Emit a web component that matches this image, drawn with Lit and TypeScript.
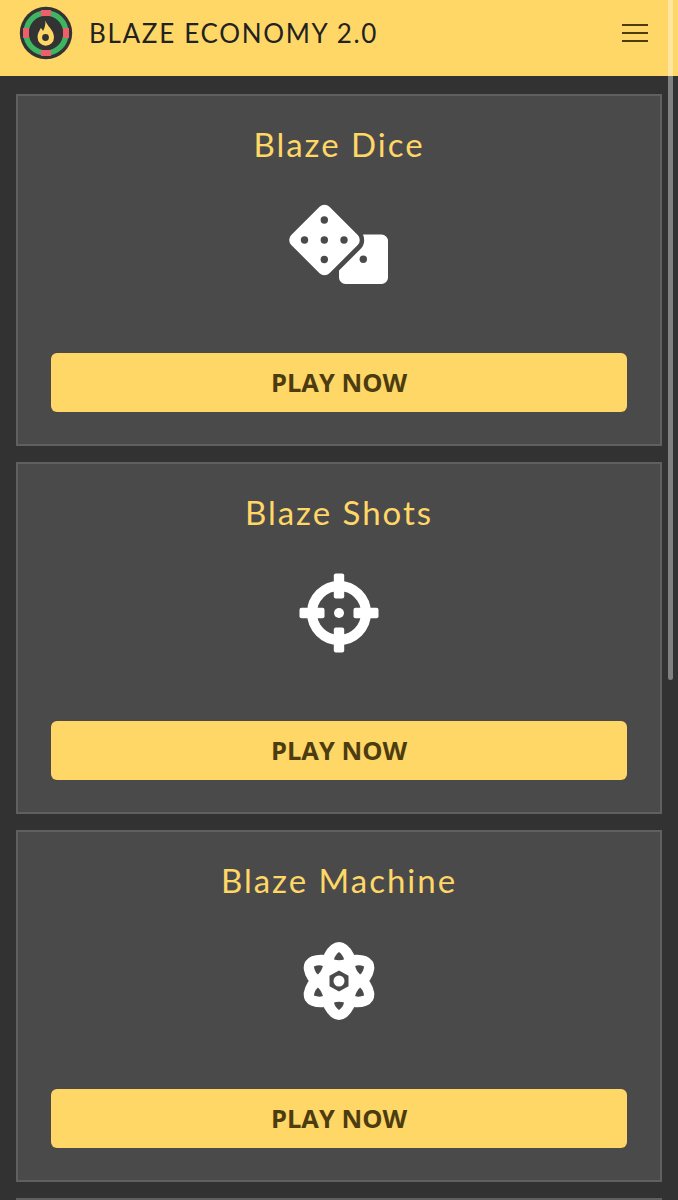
import { LitElement, html, css, svg } from "lit";
import { customElement } from "lit/decorators.js";

const dice = svg`<svg class="ico" width="100" height="82" viewBox="0 -1 100 82">
  <rect x="8.500" y="8" width="54" height="54" rx="7" transform="rotate(45 35.5 35)" fill="#fff"/>
  <g fill="#4a4a4a">
    <circle cx="35.300" cy="15" r="3.700"/><circle cx="15.500" cy="35" r="3.700"/><circle cx="35.300" cy="35" r="3.700"/><circle cx="55" cy="35" r="3.700"/><circle cx="35.300" cy="54.500" r="3.700"/>
  </g>
  <path fill="#fff" d="M74 29.500H92.500a6.500 6.500 0 0 1 6.500 6.500V72.500a6.500 6.500 0 0 1-6.500 6.500H56.500a6.500 6.500 0 0 1-6.500-6.500V65.500L72 43.500C75.500 40 76 34 74 29.500Z"/>
  <circle cx="74.300" cy="54.300" r="3.700" fill="#4a4a4a"/>
</svg>`;

const target = svg`<svg class="ico" width="82" height="82" viewBox="-41 -41 82 82">
  <circle r="27" fill="none" stroke="#fff" stroke-width="10"/>
  <g fill="#fff">
    <rect x="-5.200" y="-39.500" width="10.400" height="25" rx="2"/><rect x="-5.200" y="14.500" width="10.400" height="25" rx="2"/>
    <rect x="-39.500" y="-5.200" width="25" height="10.400" rx="2"/><rect x="14.500" y="-5.200" width="25" height="10.400" rx="2"/>
    <circle r="5"/>
  </g>
</svg>`;

const hole = "M0-29C2.500-27 4.500-24.500 5-21.500 2-20.500-2-20.500-5-21.500-4.500-24.500-2.500-27 0-29Z";
const atom = svg`<svg class="ico" width="82" height="82" viewBox="-41 -41 82 82">
  <g fill="#fff">
    <ellipse rx="20.500" ry="39"/>
    <ellipse rx="20.500" ry="39" transform="rotate(60)"/>
    <ellipse rx="20.500" ry="39" transform="rotate(120)"/>
  </g>
  <g fill="#4a4a4a">
    ${[0, 60, 120, 180, 240, 300].map((a) => svg`<path d=${hole} transform="rotate(${a})"/>`)}
    <path d="M0-10.500 9.500-5.200V5.200L0 10.500-9.500 5.200V-5.200Z"/>
  </g>
  <circle r="5.500" fill="#fff"/>
</svg>`;

const logo = svg`<svg width="54" height="54" viewBox="-27 -27 54 54">
  <circle r="26.200" fill="#333"/>
  <circle r="20" fill="none" stroke="#3fb562" stroke-width="5.500"/>
  <g fill="#ee5f6c">
    <rect x="-5" y="-23" width="10" height="6"/><rect x="-5" y="17" width="10" height="6"/>
    <rect x="-23" y="-5" width="6" height="10"/><rect x="17" y="-5" width="6" height="10"/>
  </g>
  <path fill="#ffd766" d="M-0.500-12.500C1-6.500 8-3.500 8 4.500A8.200 8.200 0 0 1-8.400 4.500C-8.400 0-6.500-2-5.200-5-4-4-3.500-3-3-2-1.200-5-0.500-8.500-0.500-12.500Z"/>
  <circle cx="-0.500" cy="4.500" r="3.400" fill="#333"/>
</svg>`;

const cards = [
  { title: "Blaze Dice", icon: dice },
  { title: "Blaze Shots", icon: target },
  { title: "Blaze Machine", icon: atom },
];

@customElement("app-root")
export class AppRoot extends LitElement {
  static styles = css`
    :host {
      display: block;
      position: relative;
      width: 678px;
      height: 1200px;
      overflow: hidden;
      background: #323232;
      font-family: "Lato", "Noto Sans", sans-serif;
    }
    .bar {
      height: 76px;
      box-sizing: border-box;
      background: #ffd766;
      display: flex;
      align-items: center;
      padding: 0 30px 10px 19px;
      gap: 16px;
    }
    .logo { display: flex; width: 54px; height: 54px; }
    .name {
      flex: 1;
      font-size: 26px;
      letter-spacing: 1.680px;
      color: #222;
      white-space: nowrap;
      line-height: 40px;
    }
    .burger {
      width: 26px;
      display: flex;
      flex-direction: column;
      gap: 6.500px;
    }
    .burger span { display: block; height: 1.500px; background: #4f3b08; }
    .list {
      display: flex;
      flex-direction: column;
      gap: 16px;
      padding: 18px 16px;
    }
    .card {
      height: 352px;
      box-sizing: border-box;
      flex: none;
      border: 2px solid #606060;
      background: #4a4a4a;
      padding: 27px 33px 32px;
      display: flex;
      flex-direction: column;
      align-items: center;
    }
    .title {
      height: 44px;
      line-height: 42px;
      font-size: 33px;
      letter-spacing: 2px;
      color: #ffd766;
      white-space: nowrap;
    }
    .icon {
      height: 156px;
      margin-bottom: 30px;
      display: flex;
      align-items: center;
      justify-content: center;
    }
    .ico { display: block; }
    .btn {
      align-self: stretch;
      height: 59px;
      flex: none;
      border: 0;
      border-radius: 6px;
      background: #ffd766;
      color: #4d3c10;
      font: 700 25.500px "Open Sans", sans-serif;
      padding: 0 0 2px;
    }
    .thumb {
      position: absolute;
      right: 5px;
      top: 0;
      width: 5px;
      height: 680px;
      border-radius: 0 0 3px 3px;
      background: rgba(255, 255, 255, 0.38);
    }
  `;

  render() {
    return html`
      <header class="bar">
        <div class="logo">${logo}</div>
        <div class="name">BLAZE ECONOMY 2.0</div>
        <div class="burger"><span></span><span></span><span></span></div>
      </header>
      <main class="list">
        ${cards.map(
          (c) => html`<section class="card">
            <div class="title">${c.title}</div>
            <div class="icon">${c.icon}</div>
            <button class="btn">PLAY NOW</button>
          </section>`
        )}
        <section class="card"></section>
      </main>
      <div class="thumb"></div>
    `;
  }
}
